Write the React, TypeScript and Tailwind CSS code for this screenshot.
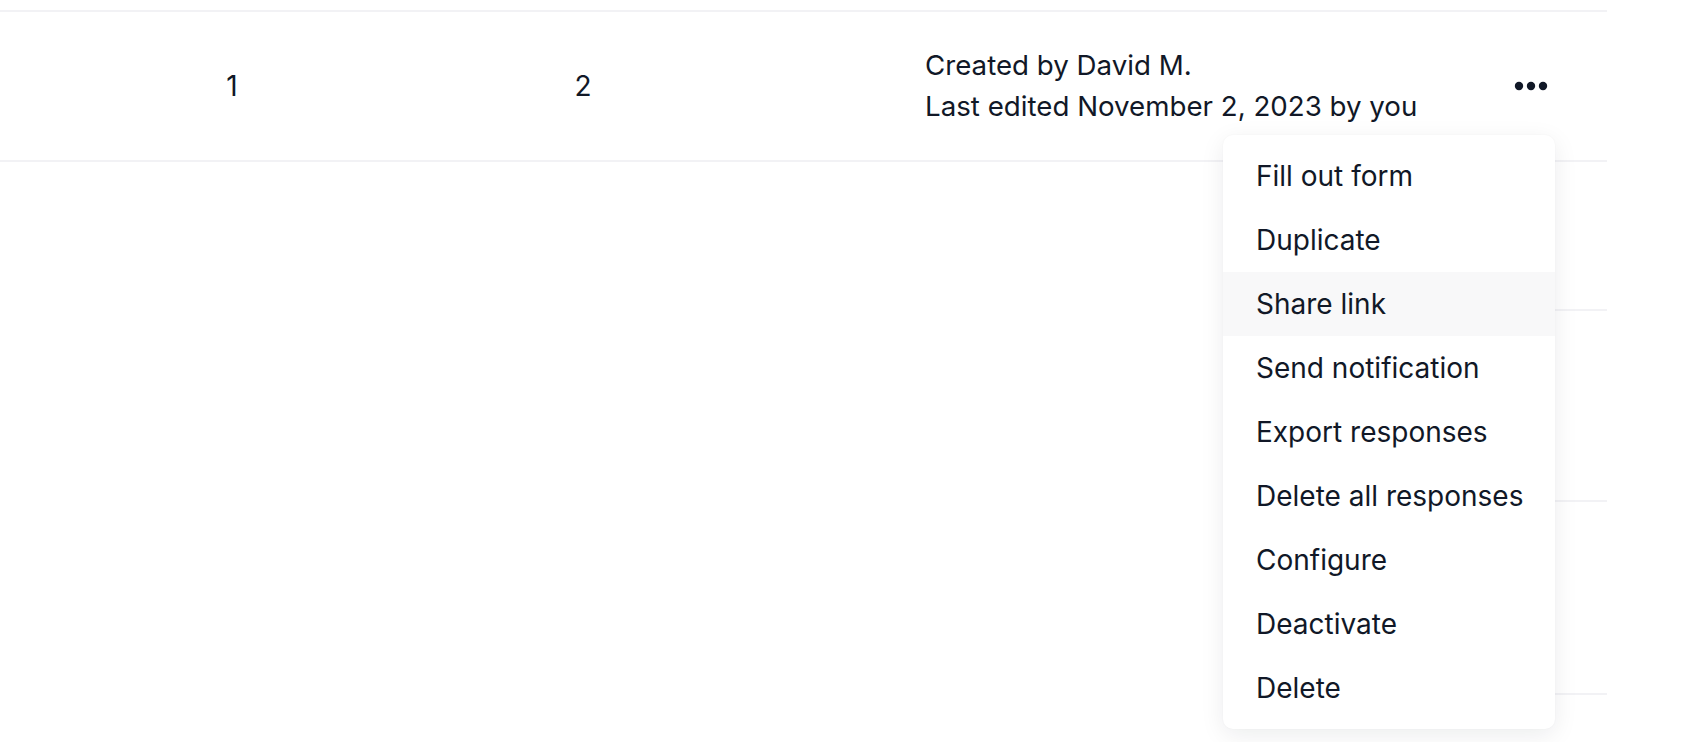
import React from "react";

const items = [
  "Fill out form",
  "Duplicate",
  "Share link",
  "Send notification",
  "Export responses",
  "Delete all responses",
  "Configure",
  "Deactivate",
  "Delete",
];

export default function App() {
  return (
    <div
      className="relative w-[1693px] h-[742px] overflow-hidden bg-white text-[#111827]"
      style={{ fontFamily: "Inter, 'Noto Sans', sans-serif" }}
    >
      <div className="pt-[10px]">
        <div className="flex w-[1607px] h-[152px] items-center border-y-2 border-[#f2f2f5]">
          <div className="w-[464px] text-center text-[28px] leading-[40px]">1</div>
          <div className="w-[238px] text-center text-[28px] leading-[40px]">2</div>
          <div className="flex-1 pl-[223px] text-[27.7px] leading-[41px]">
            <div>Created by David M.</div>
            <div>Last edited November 2, 2023 by you</div>
          </div>
          <div className="w-[152px] flex justify-center">
            <svg width="34" height="10" viewBox="0 0 34 10" fill="#111827">
              <circle cx="5" cy="5" r="4.2" />
              <circle cx="17" cy="5" r="4.2" />
              <circle cx="29" cy="5" r="4.2" />
            </svg>
          </div>
        </div>
        <div className="ml-[1223px] w-[384px] flex flex-col">
          <div className="h-[149px] border-b-2 border-[#f2f2f5]" />
          <div className="h-[191px] border-b-2 border-[#f2f2f5]" />
          <div className="h-[193px] border-b-2 border-[#f2f2f5]" />
        </div>
      </div>

      <div className="absolute left-[1223px] top-[135px] w-[332px] rounded-[10px] bg-white py-[9px] shadow-[0_6px_24px_rgba(15,23,42,0.08),0_0_2px_rgba(15,23,42,0.04)]">
        {items.map((label) => (
          <div
            key={label}
            className={`h-[64px] flex items-center pl-[33px] text-[28px] ${
              label === "Share link" ? "bg-[#f8f8f9]" : ""
            }`}
          >
            {label}
          </div>
        ))}
      </div>
    </div>
  );
}
